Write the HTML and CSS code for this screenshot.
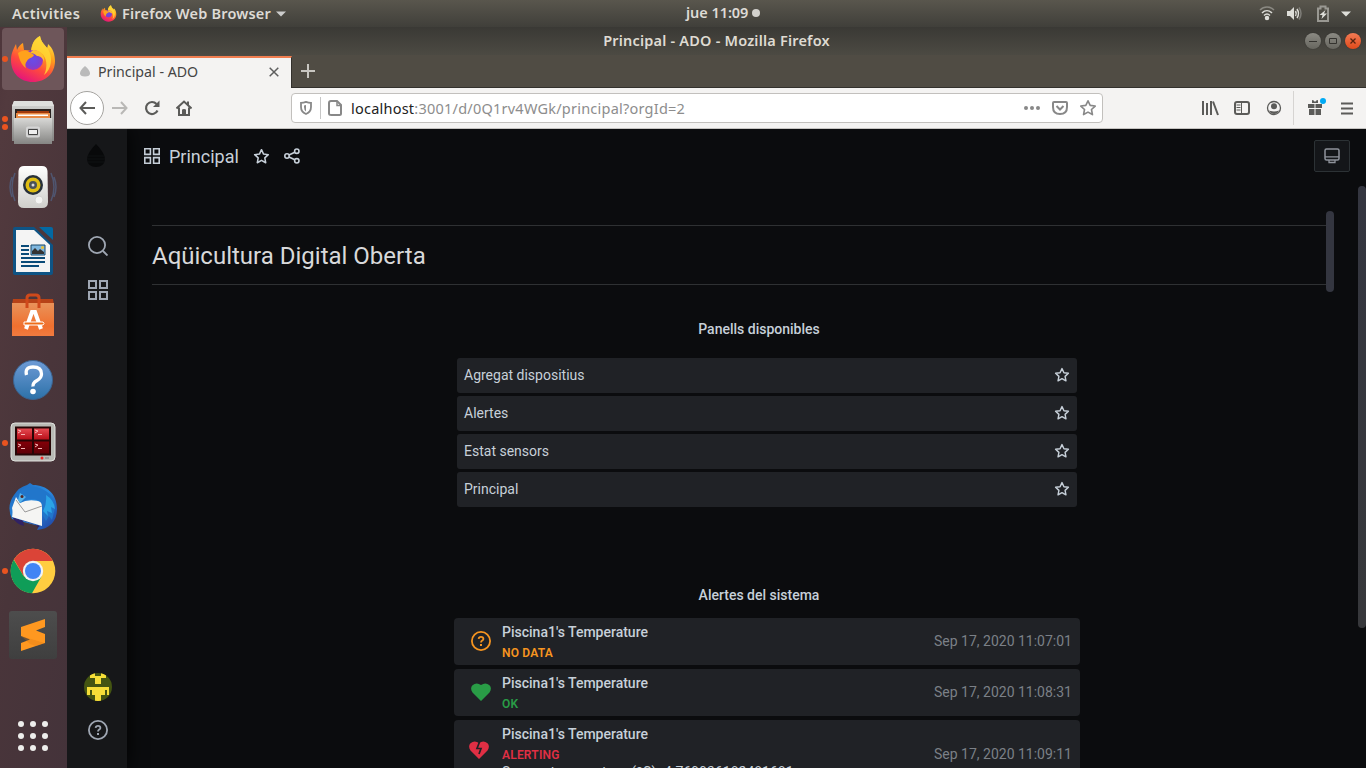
FILE: index.html
```html
<!DOCTYPE html>
<html lang="ca">
<head>
<meta charset="utf-8">
<title>Principal - ADO</title>
<link rel="stylesheet" href="styles.css">
</head>
<body>
<svg class="defs" width="0" height="0">
  <defs>
    <linearGradient id="fox" x1=".8" y1="0" x2=".3" y2="1"><stop offset="0" stop-color="#fff44f"/><stop offset=".35" stop-color="#ffa21a"/><stop offset=".65" stop-color="#ff4a3d"/><stop offset="1" stop-color="#e3127e"/></linearGradient>
    <radialGradient id="globe"><stop offset="0" stop-color="#6a4be8"/><stop offset=".6" stop-color="#7544d6"/><stop offset="1" stop-color="#9a35c0"/></radialGradient>
    <linearGradient id="metal" x1="0" y1="0" x2="0" y2="1"><stop offset="0" stop-color="#d8d8d6"/><stop offset="1" stop-color="#858583"/></linearGradient>
    <linearGradient id="white" x1="0" y1="0" x2="0" y2="1"><stop offset="0" stop-color="#fff"/><stop offset="1" stop-color="#cfcfcb"/></linearGradient>
    <linearGradient id="bag" x1="0" y1="0" x2="0" y2="1"><stop offset="0" stop-color="#e9935a"/><stop offset=".7" stop-color="#f0702f"/><stop offset="1" stop-color="#f17b40"/></linearGradient>
    <linearGradient id="blue" x1="0" y1="0" x2="0" y2="1"><stop offset="0" stop-color="#6e9bd6"/><stop offset="1" stop-color="#2c71a8"/></linearGradient>
    <linearGradient id="red" x1="0" y1="0" x2="0" y2="1"><stop offset="0" stop-color="#e64a52"/><stop offset=".45" stop-color="#b70e18"/><stop offset=".5" stop-color="#850008"/><stop offset="1" stop-color="#5d0006"/></linearGradient>
    <linearGradient id="bird" x1="0" y1="0" x2="1" y2="1"><stop offset="0" stop-color="#1c63b8"/><stop offset=".5" stop-color="#2a8be0"/><stop offset="1" stop-color="#203c9c"/></linearGradient>
    <linearGradient id="tile" x1="0" y1="0" x2="0" y2="1"><stop offset="0" stop-color="#4d4d4d"/><stop offset="1" stop-color="#3f3f3f"/></linearGradient>
  </defs>
  <symbol id="firefox" viewBox="0 0 48 48">
    <path d="M24 47C11 47 2 38 2 25c0-7 3-12 5-16l1 6c1-3 4-6 6-7l1 7c2 0 5 0 7 1 1-7 3-12 9-15 1 6 4 8 7 12 0 0 1-2 1-4 5 4 7 11 7 17 0 12-9 21-22 21z" fill="url(#fox)"/>
    <path d="M22 16c1-7 3-12 9-15 1 6 5 9 8 13 5 8 4 20-4 26 4-8 3-18-3-22-3-2-6-2-10-2z" fill="#ffd735" opacity=".85"/>
    <circle cx="24" cy="25" r="10" fill="url(#globe)"/>
    <path d="M9 18c4-3 9-3 13 0l3 2c-1 3-6 3-7 6-2 2-2 5-1 7-5-3-7-10-8-15z" fill="#ffa11c"/>
    <path d="M24 15c8 0 12 5 11 12-1-4-4-6-7-6-2-2-4-3-7-3z" fill="#ffbd2e"/>
  </symbol>
  <symbol id="star" viewBox="0 0 16 16"><path d="M8 1.600l1.950 4.100 4.450.550-3.300 3.100.850 4.500L8 11.650l-3.950 2.200.850-4.500-3.300-3.100 4.450-.550z" fill="none" stroke="currentColor" stroke-width="1.450" stroke-linejoin="round"/></symbol>
  <symbol id="grid" viewBox="0 0 20 20"><path d="M1 1h7v7H1zM12 1h7v7h-7zM1 12h7v7H1zM12 12h7v7h-7z" fill="none" stroke="currentColor" stroke-width="2"/></symbol>
  <symbol id="question" viewBox="0 0 20 20"><circle cx="10" cy="10" r="9.100" fill="none" stroke="currentColor" stroke-width="1.800"/><path d="M7.600 7.900c.2-1.400 1.100-2.100 2.400-2.100s2.400.9 2.400 2.100c0 1.700-2.400 1.600-2.400 3.500" fill="none" stroke="currentColor" stroke-width="1.800"/><rect x="9" y="13" width="2" height="2" fill="currentColor"/></symbol>
</svg>

<header class="topbar">
  <span class="activities">Activities</span>
  <svg class="app-icon" width="17" height="17"><use href="#firefox"/></svg>
  <span class="app-name">Firefox Web Browser</span>
  <svg class="caret" width="10" height="6"><path d="M0 .5h10L5 5.500z" fill="#ccc"/></svg>
  <div class="clock"><span>jue 11:09</span><i></i></div>
  <div class="tray">
    <svg width="16" height="16" viewBox="0 0 16 16" fill="none" stroke="#deded9" stroke-width="1.500"><path d="M1 4c4-4 10-4 14 0" opacity=".4"/><path d="M3 7c3-3 7-3 10 0M5 9.500c2-2 4-2 6 0"/><circle cx="8" cy="12" r="1.500" fill="#deded9"/></svg>
    <svg width="16" height="16" viewBox="0 0 16 16" fill="none" stroke="#deded9" stroke-width="1.500"><path d="M1 5h3l4-4v13l-4-4H1z" fill="#deded9" stroke="none"/><path d="M9.500 5q1.500 2.500 0 5M11 3q3 4.500 0 9"/><path d="M13 1.500q4 6 0 12" opacity=".35"/></svg>
    <svg width="14" height="18" viewBox="0 0 14 18"><path d="M2 3.500h2.500v-2h5v2H12v12.500H2z" fill="none" stroke="#999892" stroke-width="2"/><path d="M9.500 5L3.500 10h3l-1 4 5.500-5.500h-3z" fill="#deded9"/></svg>
    <svg width="10" height="6"><path d="M0 .5h10L5 5.500z" fill="#deded9"/></svg>
  </div>
</header>

<div class="desktop">
  <nav class="dock">
    <div class="dock-item active one"><svg width="48" height="48"><use href="#firefox"/></svg></div>
    <div class="dock-item two"><svg width="48" height="48" viewBox="0 0 48 48"><path d="M5 2h38l2 5v35H3V7z" fill="url(#metal)"/><path d="M5 2h38l2 5H3z" fill="#dfdfdd"/><path d="M6 10h36v10H6z" fill="#2a2220"/><path d="M8 12h32v2H8z" fill="#a23a0c"/><path d="M7 14h34v5H7z" fill="#e88a45"/><path d="M9 15.500h30v1.500H9z" fill="#fff"/><path d="M5 19h38v26H5z" fill="url(#metal)"/><rect x="18" y="28.500" width="12" height="9" rx="1" fill="#aaa" stroke="#d5d5d5" stroke-width="2"/><path d="M19.500 30.500h9v5h-9z" fill="#eee" stroke="#444"/></svg></div>
    <div class="dock-item"><svg width="48" height="48" viewBox="0 0 48 48"><path d="M6 10q-6 14 0 28M42 10q6 14 0 28M3 14q-4 10 0 20M45 14q4 10 0 20" fill="none" stroke="#52678e" stroke-width="1.500" opacity=".65"/><path d="M15 3h18q5 0 5.500 5l.5 31q0 6-6 6H15q-6 0-6-6l.5-31q.5-5 5.500-5z" fill="url(#white)"/><circle cx="24" cy="22" r="10" fill="#27313a"/><circle cx="24" cy="22" r="7.500" fill="#dfbd13"/><circle cx="24" cy="22" r="4" fill="#4a5259"/><circle cx="24" cy="22" r="1.500" fill="#ddd"/><circle cx="30" cy="37" r="4" fill="#f4f4f2" stroke="#d5d5d2"/></svg></div>
    <div class="dock-item"><svg width="48" height="48" viewBox="0 0 48 48"><path d="M6 0h19l19 18v28q0 2-2 2H6q-2 0-2-2V2q0-2 2-2z" fill="#0e5485"/><path d="M7 3h18l16 15v27H7z" fill="#f4f4f4"/><path d="M30 0h12q2 0 2 2v11z" fill="#0369a3"/><path d="M12 19h8M12 23h8M12 27h8M12 31h24M12 35h24M12 39h18" stroke="#0a4b78" stroke-width="2"/><path d="M22 18h14v10H22z" fill="#7fb7df" stroke="#18496b"/><path d="M23 27v-3l3-3 3 3 2-2 4 3v2z" fill="#333"/><circle cx="33.500" cy="20.500" r="1.500" fill="#ecc235"/></svg></div>
    <div class="dock-item"><svg width="48" height="48" viewBox="0 0 48 48"><path d="M4 8h40l1 6H3z" fill="#b74217"/><path d="M3 12h42v33H3z" fill="url(#bag)"/><path d="M18 17V7q0-3 3-3h6q3 0 3 3v10" fill="none" stroke="#cf491b" stroke-width="3"/><path d="M17 38l6-17h3l6 17" fill="none" stroke="#fff" stroke-width="4"/><path d="M15 31h19q2 1.500 0 3H15z" fill="#ef6d18" stroke="#fff"/></svg></div>
    <div class="dock-item"><svg width="48" height="48" viewBox="0 0 48 48"><circle cx="24" cy="25" r="19.500" fill="url(#blue)" stroke="#3b6390"/><path d="M17.500 20q-2-8 6.500-8t8.500 7q0 4-4.500 6.500t-4 6" fill="none" stroke="#fff" stroke-width="3.300"/><circle cx="24" cy="36.500" r="2.800" fill="#fff"/></svg></div>
    <div class="dock-item one"><svg width="48" height="48" viewBox="0 0 48 48"><rect x="2" y="4" width="44" height="38" rx="4" fill="#b9bab5" stroke="#e1e2de"/><path d="M6 7.500h36v29H6z" fill="#270606"/><path d="M8 9.500h15v11H8zM25 9.500h15v11H25zM8 22.500h15v12H8zM25 22.500h15v12H25z" fill="url(#red)"/><path d="M9 11l3 1-3 2M26 11l3 1-3 2M9 25l3 1-3 2M26 25l3 1-3 2M12 15.500h4M29 15.500h4M12 29.500h4M29 29.500h4" fill="none" stroke="#f7b5b5"/><circle cx="33" cy="39" r="1.500" fill="#e22"/><path d="M36 38h4v2h-4z" fill="#999"/></svg></div>
    <div class="dock-item"><svg width="48" height="48" viewBox="0 0 48 48"><path d="M3 36Q-3 23 5 12 10 4 18 2l3-2 3 2c14 0 24 9 24 24 0 13-8 20-20 21l2-4z" fill="url(#bird)"/><path d="M3 34l28 9-3 2q3-3-14-8l1 6Q7 41 3 34z" fill="#302265"/><path d="M7 14l4 6q9-5 22-1v24L3 34q1-5 0-9z" fill="#f5f5f3"/><path d="M7 17l9 12 17-6" fill="none" stroke="#999"/><path d="M10 9q9-8 21-4 15 6 15 20l-3 12-3-4-3 5-4-7q2-12-5-14-8-3-17 3z" fill="#2176cb"/><path d="M37 12q8 5 9 14l-4-2 1 6-5-2 1 5-5-5q4-7 3-16z" fill="#2ba3e5"/><path d="M9 17l2-7 6 4-6 6z" fill="#58b4eb"/><circle cx="13" cy="13.500" r="1.500" fill="#522"/></svg></div>
    <div class="dock-item one"><svg width="48" height="48" viewBox="0 0 48 48"><circle cx="24" cy="24" r="22.300" fill="#ffcd40"/><path d="M5 12.500A22.300 22.300 0 0 1 43 12.500L43.500 14H24L14.500 29z" fill="#db4437"/><path d="M4.700 12.700A22.300 22.300 0 0 0 23 46.300L32.500 29.500 24 34 14.500 29z" fill="#0f9d58"/><circle cx="24" cy="24" r="10.200" fill="#f3f3f3"/><circle cx="24" cy="24" r="8" fill="#4285f4"/></svg></div>
    <div class="dock-item"><svg width="48" height="48" viewBox="0 0 48 48"><rect width="48" height="48" rx="3" fill="url(#tile)"/><path d="M12 16L36 8v8l-9 3.500 9 3.500v9L12 40v-8l9-3.500-9-3.500z" fill="#ff9820"/><path d="M12 25l24 7-9 3-6-2z" fill="#d87512" opacity=".3"/><path d="M12 17v7.500l24 7.500v-8z" fill="#ff9820"/></svg></div>
    <div class="dock-item apps"><svg width="30" height="30" viewBox="0 0 30 30" fill="#eeeeec"><circle cx="3" cy="3" r="3"/><circle cx="15" cy="3" r="3"/><circle cx="27" cy="3" r="3"/><circle cx="3" cy="15" r="3"/><circle cx="15" cy="15" r="3"/><circle cx="27" cy="15" r="3"/><circle cx="3" cy="27" r="3"/><circle cx="15" cy="27" r="3"/><circle cx="27" cy="27" r="3"/></svg></div>
  </nav>

  <section class="window">
    <div class="titlebar">
      <span class="window-title">Principal - ADO - Mozilla Firefox</span>
      <div class="window-buttons">
        <i><svg width="16" height="16"><path d="M4 8.500h8" stroke="#34332f"/></svg></i>
        <i><svg width="16" height="16"><path d="M4.500 5.500h7v5h-7z" fill="none" stroke="#34332f"/></svg></i>
        <i class="close"><svg width="16" height="16"><path d="M5.500 5.500l5 5m0-5l-5 5" stroke="#57230f" stroke-width="1.300"/></svg></i>
      </div>
    </div>
    <div class="tabs">
      <div class="tab">
        <svg width="12" height="12"><path d="M6 0q5 4 5 7.500Q11 10.500 6 10.500T1 7.500Q1 4 6 0z" fill="#bababa"/></svg>
        <span class="tab-title">Principal - ADO</span>
        <svg width="10" height="10"><path d="M.7.7l8.600 8.600m0-8.600L.7 9.300" stroke="#5e5e5e" stroke-width="1.500"/></svg>
      </div>
      <svg class="new-tab" width="14" height="14"><path d="M7 0v14M0 7h14" stroke="#c8c6c1" stroke-width="2"/></svg>
    </div>
    <div class="toolbar">
      <div class="nav-buttons">
        <b class="back"><svg width="16" height="14"><path d="M7 1L1.500 7 7 13M2 7h14" fill="none" stroke="#5b5b59" stroke-width="2"/></svg></b>
        <b><svg width="16" height="14"><path d="M9 1l5.500 6L9 13M14 7H0" fill="none" stroke="#b9b8b6" stroke-width="2"/></svg></b>
        <b><svg width="16" height="16"><path d="M13.500 10.500A6 6 0 1 1 12.500 4" fill="none" stroke="#5b5b59" stroke-width="2.200"/><path d="M15.500.500v6.500H9z" fill="#5b5b59"/></svg></b>
        <b><svg width="16" height="16"><path d="M.500 8.500L8 1.500l7.500 7M3 7.500V15h10V7.500" fill="none" stroke="#5b5b59" stroke-width="2"/><path d="M6 14.500V10q0-1 2-1t2 1v4.500z" fill="#5b5b59"/><path d="M11 1.500h2v4h-2z" fill="#5b5b59"/></svg></b>
      </div>
      <div class="urlbar">
        <svg width="12" height="14"><path d="M6 .900q2.500 1 5 1V6q0 5-5 7Q1 11 1 6V1.900q2.500 0 5-1z" fill="none" stroke="#888" stroke-width="1.800"/><path d="M6 4v6.500Q4 9 4 6V4.500z" fill="#888"/></svg>
        <i class="url-sep"></i>
        <svg width="14" height="16"><path d="M3 1h6l4 4v8.500q0 1.500-1.500 1.500h-8Q1 15 1 13.500V3q0-2 2-2z" fill="none" stroke="#888" stroke-width="2"/><path d="M9 1v4.500h4" fill="none" stroke="#888" stroke-width="1.500"/></svg>
        <span class="url"><em>localhost</em>:3001/d/0Q1rv4WGk/principal?orgId=2</span>
        <svg class="dots" width="16" height="4" fill="#888"><circle cx="2" cy="2" r="2"/><circle cx="8" cy="2" r="2"/><circle cx="14" cy="2" r="2"/></svg>
        <svg class="pocket" width="16" height="14"><path d="M2 1h12q1 0 1 1v4q0 7-7 7T1 6V2q0-1 1-1z" fill="none" stroke="#888" stroke-width="2"/><path d="M4.500 5L8 8.500 11.500 5" fill="none" stroke="#888" stroke-width="2"/></svg>
        <svg class="bookmark" width="18" height="18" viewBox="0 0 16 16"><use href="#star"/></svg>
      </div>
      <div class="tools">
        <svg width="32" height="16"><g stroke="#5b5b59" stroke-width="2"><path d="M9 1v14M13 3v12M17 1v14M19 1.500l5 13.500"/></g></svg>
        <svg width="32" height="16"><rect x="9" y="2" width="14" height="12" rx="2" fill="none" stroke="#5b5b59" stroke-width="2"/><path d="M15.500 2v12M10.500 5h4M10.500 7.500h4M10.500 10h4" stroke="#5b5b59"/></svg>
        <svg width="32" height="16"><circle cx="16" cy="8" r="6.500" fill="none" stroke="#5b5b59" stroke-width="1.300"/><circle cx="16" cy="6.300" r="3" fill="#5b5b59"/><path d="M11 10.500q5 2 10 0-1.500 3.500-5 3.500t-5-3.500z" fill="#5b5b59"/></svg>
        <i class="tool-sep"></i>
        <svg class="gift" width="22" height="20"><path d="M1 8h6.500v4H1zM8.500 8H15v4H8.500zM2 13h5.500v6H2zM8.500 13H14v6H8.500z" fill="#5b5b59"/><path d="M5 4q2 0 3 2 1-2 3-2v3H5z" fill="#5b5b59"/><circle cx="16" cy="5" r="3" fill="#00aaf5"/></svg>
        <svg class="menu" width="12" height="13"><path d="M0 1.500h12M0 6.500h12M0 11.500h12" stroke="#5b5b59" stroke-width="2"/></svg>
      </div>
    </div>

    <div class="page">
      <aside class="sidemenu">
        <svg class="logo" width="20" height="24"><path d="M10 0q9 9 9 15.500Q18 23 10 23T1 15.500Q1 9 10 0z" fill="#08090a"/><path d="M2 12h16M1 15h18M2 18h16" stroke="#15171a" stroke-width=".6"/></svg>
        <svg class="search" width="20" height="20"><circle cx="9" cy="9" r="8.100" fill="none" stroke="#9fa7b3" stroke-width="1.800"/><path d="M15 15l4.500 4.500" stroke="#9fa7b3" stroke-width="1.900"/></svg>
        <svg class="side-grid" width="20" height="20"><use href="#grid"/></svg>
        <svg class="avatar" width="28" height="28" viewBox="0 0 28 28"><defs><clipPath id="round"><circle cx="14" cy="14" r="14"/></clipPath></defs><g clip-path="url(#round)"><path d="M0 0h28v28H0z" fill="#445512"/><path d="M6 0h5v3h6V0h5v5h-5v6h-6V5H6zM3 14h22v8h-2v-5h-2v5h-4v6h-6v-6H8v-5H6v5H3z" fill="#f6de38"/></g></svg>
        <svg class="help" width="20" height="20"><use href="#question"/></svg>
      </aside>

      <main class="content">
        <div class="navbar">
          <svg width="16" height="16"><use href="#grid"/></svg>
          <span class="dash-title">Principal</span>
          <svg class="nav-star" width="17" height="17"><use href="#star"/></svg>
          <svg class="share" width="16" height="16" fill="none" stroke="currentColor" stroke-width="1.600"><circle cx="3" cy="8" r="2.200"/><circle cx="12.800" cy="3.200" r="2.200"/><circle cx="12.800" cy="12.800" r="2.200"/><path d="M5 7l5.800-2.800M5 9l5.800 2.800"/></svg>
          <div class="kiosk"><svg width="16" height="16"><rect x="1" y="1" width="14" height="11" rx="1.500" fill="none" stroke="#8e939b" stroke-width="1.500"/><path d="M1 8.800h14M5 12v2.500h6V12" fill="none" stroke="#8e939b" stroke-width="1.300"/></svg></div>
        </div>

        <div class="text-panel">
          <div class="text-body"><h1>Aqüicultura Digital Oberta</h1></div>
          <div class="panel-thumb"></div>
        </div>

        <h2 class="panel-title">Panells disponibles</h2>
        <ul class="dash-list">
          <li><span>Agregat dispositius</span><svg width="16" height="16"><use href="#star"/></svg></li>
          <li><span>Alertes</span><svg width="16" height="16"><use href="#star"/></svg></li>
          <li><span>Estat sensors</span><svg width="16" height="16"><use href="#star"/></svg></li>
          <li><span>Principal</span><svg width="16" height="16"><use href="#star"/></svg></li>
        </ul>

        <h2 class="panel-title alerts-title">Alertes del sistema</h2>
        <ul class="alert-list">
          <li class="nodata"><svg width="20" height="20"><use href="#question"/></svg><div><p>Piscina1's Temperature</p><strong>NO DATA</strong></div><time>Sep 17, 2020 11:07:01</time></li>
          <li class="ok"><svg width="20" height="20"><path d="M10 19L1.500 10.500Q-1.300 6 1.500 3.200 5.500-.300 10 3q4.500-3.300 8.500.200 2.800 2.800 0 7.300z" fill="currentColor"/></svg><div><p>Piscina1's Temperature</p><strong>OK</strong></div><time>Sep 17, 2020 11:08:31</time></li>
          <li class="alerting"><svg width="20" height="20"><path d="M10 19L1.500 10.500Q-1.300 6 1.500 3.200 5.500-.300 10 3q4.500-3.300 8.500.200 2.800 2.800 0 7.300z" fill="currentColor"/><path d="M10.500 2L8 8.500h4L10 14" fill="none" stroke="#202226" stroke-width="1.700"/></svg><div><p>Piscina1's Temperature</p><strong>ALERTING</strong><p class="info">Sensor temperature (ºC)=4.769936182481681</p></div><time>Sep 17, 2020 11:09:11</time></li>
        </ul>
        <div class="page-thumb"></div>
      </main>
    </div>
  </section>
</div>
</body>
</html>
```
FILE: styles.css
```css
* { box-sizing: border-box; margin: 0; padding: 0; }
body { width: 1366px; height: 768px; overflow: hidden; display: flex; flex-direction: column; background: #0b0c0e; font-family: Roboto, "Liberation Sans", sans-serif; }
svg { display: block; flex: none; }
.defs { position: absolute; }
i, em { font-style: normal; }

.topbar { position: relative; height: 27px; flex: none; display: flex; align-items: center; padding: 0 15px 0 12px; background: linear-gradient(#59564d, #403f3a); color: #dedbd5; font: 600 14.5px/27px "Noto Sans", sans-serif; white-space: nowrap; }
.activities { width: 88px; letter-spacing: .35px; }
.app-name { width: 149px; margin-left: 5px; letter-spacing: .19px; }
.caret { margin-left: 5px; }
.clock { position: absolute; left: 686px; top: -1px; display: flex; align-items: center; width: 75px; }
.clock span { width: 62px; margin-right: 4px; letter-spacing: -.05px; }
.clock i { width: 8px; height: 8px; border-radius: 50%; background: #d3d1cd; }
.tray { display: flex; align-items: center; margin-left: auto; }
.tray svg + svg { margin-left: 11px; }
.tray svg:nth-child(3) { margin-left: 14px; }

.desktop { flex: 1; min-height: 0; display: flex; }
.dock { width: 67px; flex: none; display: flex; flex-direction: column; background: linear-gradient(100deg, #4e363b, #523a3e 10%, #49353a 55%, #44333a); }
.dock-item { width: 62px; height: 62px; margin: 1px 2px; flex: none; display: flex; align-items: center; justify-content: center; position: relative; border-radius: 4px; }
.dock-item.active { background: #6e565a; }
.dock-item.one::before, .dock-item.two::before { content: ""; position: absolute; left: 0; top: 28px; width: 6px; height: 6px; border-radius: 50%; background: #e95420; }
.dock-item.two::before { top: 24px; box-shadow: 0 8px #e95420; }
.apps { margin-top: auto; }

.window { flex: 1; min-width: 0; display: flex; flex-direction: column; }
.titlebar { height: 28px; flex: none; position: relative; background: linear-gradient(#3a3935, #4c4a43); text-align: center; color: #dfdbd2; font: 600 14.5px/27px "Noto Sans", sans-serif; }
.window-title { letter-spacing: .2px; }
.window-buttons { position: absolute; right: 5px; top: 6px; display: flex; gap: 4px; }
.window-buttons i { width: 16px; height: 16px; border-radius: 50%; background: linear-gradient(#8b8a83, #67665f); box-shadow: 0 0 1px #222; }
.window-buttons .close { background: linear-gradient(#f37b54, #df4a1b); }
.tabs { height: 33px; flex: none; display: flex; padding-top: 1px; background: #504c44; border-bottom: 1px solid #33312d; }
.tab { width: 225px; height: 33px; display: flex; align-items: center; padding: 0 12px 3px; background: #f4f3f2; border-top: 2px solid #f17e50; border-right: 1px solid #33312d; }
.tab-title { flex: 1; margin-left: 7px; font: 14.2px/28px "Noto Sans", sans-serif; color: #444; }
.new-tab { margin: 8px 0 0 9px; }
.toolbar { height: 41px; flex: none; display: flex; align-items: center; background: #f4f3f2; border-bottom: 1px solid #c5c3c1; padding: 0 13px 0 3px; }
.nav-buttons { width: 221px; display: flex; }
.nav-buttons b { width: 32px; height: 34px; display: flex; align-items: center; justify-content: center; }
.nav-buttons .back { width: 34px; border: 1px solid #a5a3a0; border-radius: 50%; background: #fff; }
.urlbar { width: 812px; height: 30px; display: flex; align-items: center; padding: 0 5px 0 8px; border: 1px solid #c2c0bd; border-radius: 4px; background: #fff; }
.url-sep { width: 1px; height: 22px; margin: 0 7px 0 8px; background: #c6c6c6; }
.url { flex: 1; margin-left: 9px; font: 14.5px/28px "Noto Sans", sans-serif; color: #8d8d8d; letter-spacing: .23px; }
.url em { color: #222; }
.dots { margin-right: 12px; }
.pocket { margin-right: 11px; }
.bookmark { color: #888; }
.tools { display: flex; align-items: center; margin-left: auto; }
.tool-sep { width: 1px; height: 34px; margin: 0 13px 0 3px; background: #d6d4d2; }
.gift { margin-top: -4px; }
.menu { margin-left: 12px; }

.page { flex: 1; min-height: 0; display: flex; overflow: hidden; }
.sidemenu { width: 60px; flex: none; display: flex; flex-direction: column; align-items: center; background: #161719; box-shadow: 0 0 20px #000; z-index: 1; color: #9fa7b3; padding: 15px 0 28px 2px; }
.logo { margin-right: 4px; }
.search { margin-top: 68px; }
.side-grid { margin-top: 24px; }
.avatar { margin-top: auto; }
.help { margin-top: 19px; }
.content { flex: 1; min-width: 0; position: relative; background: #0b0c0e; color: #c7d0d9; overflow: hidden; }
.navbar { height: 54px; display: flex; align-items: center; padding: 0 16px 0 17px; }
.dash-title { width: 71px; margin-left: 9px; padding-top: 2px; font-size: 18px; line-height: 24px; white-space: nowrap; }
.nav-star { margin-left: 13px; }
.share { margin-left: 14px; }
.kiosk { width: 36px; height: 32px; margin-left: auto; display: flex; align-items: center; justify-content: center; border: 1px solid #2c3235; border-radius: 2px; background: #141619; }
.text-panel { display: flex; margin: 28px 32px 0 25px; height: 82px; }
.text-body { flex: 1; margin-top: 14px; height: 60px; border-top: 1px solid #2f3133; border-bottom: 1px solid #2f3133; }
.text-body h1 { font-size: 24px; line-height: 60px; font-weight: 400; color: #d8d9da; }
.panel-thumb { width: 8px; height: 81px; border-radius: 4px; background: #343640; }
.panel-title { width: 1182px; margin: 26px 0 0 41px; text-align: center; font-size: 14px; line-height: 20px; font-weight: 500; }
.dash-list { width: 620px; margin: 19px 0 0 330px; list-style: none; }
.dash-list li { height: 35px; margin-bottom: 3px; display: flex; align-items: center; justify-content: space-between; padding: 0 7px; border-radius: 3px; background: #202226; font-size: 14px; line-height: 35px; }
.dash-list svg { margin-top: -1px; }
.alerts-title { margin-top: 75px; padding-top: 3px; }
.alert-list { width: 626px; margin: 13px 0 0 327px; list-style: none; }
.alert-list li { height: 47px; margin-bottom: 4px; display: flex; align-items: center; padding: 0 8px 0 17px; border-radius: 4px; background: #202226; font-size: 14px; }
.alert-list li > div { flex: 1; margin-left: 11px; height: 100%; padding-top: 4px; }
.alert-list p { line-height: 21px; font-weight: 500; white-space: nowrap; }
.alert-list strong { display: block; font-size: 12px; line-height: 20px; font-weight: 600; letter-spacing: .2px; }
.alert-list p.info { font-weight: 400; word-spacing: 1.500px; margin-top: -3px; }
.alert-list time { color: #7b8087; margin-top: -2px; }
.nodata > svg, .nodata strong { color: #f79520; }
.ok > svg, .ok strong { color: #299c46; }
.alerting > svg, .alerting strong { color: #e02f44; }
.nodata > svg, .ok > svg { margin-top: -1px; }
.alert-list li.alerting { height: 68px; padding-left: 15px; }
.alert-list .alerting > div { margin-left: 13px; }
.alerting > svg { margin-top: -8px; }
.alert-list .alerting time { margin-top: 0; }
.page-thumb { position: absolute; right: 0; top: 57px; width: 8px; height: 442px; border-radius: 4px; background: linear-gradient(#343640, #37383b); }
```
